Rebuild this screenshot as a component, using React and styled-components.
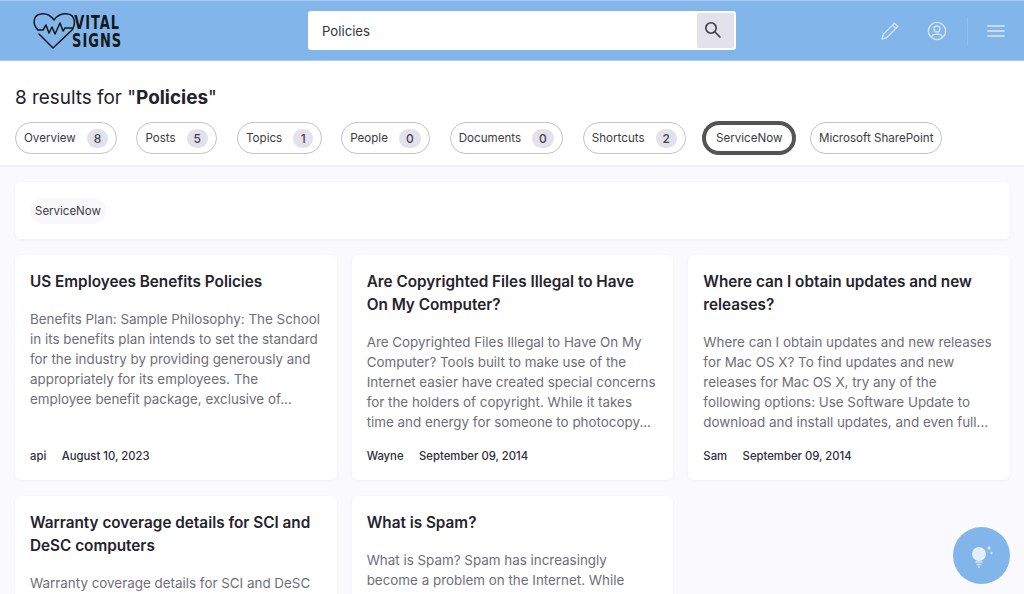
import React from "react";
import styled, { createGlobalStyle } from "styled-components";

const Global = createGlobalStyle`
  html, body { margin: 0; padding: 0; height: 594px; overflow: hidden; background: #faf9fe; }
  body { font-family: Inter, "Liberation Sans", sans-serif; color: #24232b; }
  * { box-sizing: border-box; }
`;

const Page = styled.div`
  height: 594px;
  overflow: hidden;
  position: relative;
`;
const Header = styled.header`
  height: 61px;
  background: #82b5ea;
  border-top: 1px solid #a9cdf2;
  border-bottom: 1px solid #a9cdf2;
  display: flex;
  align-items: center;
  padding: 0 17px 0 32px;
`;
const Logo = styled.div`
  width: 276px;
  display: flex;
  align-items: center;
  color: #15171c;
  svg { overflow: visible; flex: none; }
`;
const LogoText = styled.div`
  font-family: "DejaVu Sans Condensed", "DejaVu Sans", sans-serif;
  font-weight: 700;
  font-size: 19px;
  line-height: 18px;
  letter-spacing: 1.3px;
  padding-top: 1px;
  text-align: center;
  width: 66px;
  transform: scaleX(0.76);
  transform-origin: left center;
`;
const SearchBox = styled.div`
  width: 428px;
  height: 39px;
  background: #fff;
  border-radius: 3px;
  display: flex;
  align-items: stretch;
  padding: 2px;
`;
const SearchText = styled.div`
  flex: 1;
  padding-left: 12px;
  font-size: 13.2px;
  line-height: 36px;
  color: #34333b;
`;
const SearchButton = styled.div`
  width: 37px;
  background: #e2e1ec;
  border-radius: 2px;
  display: flex;
  align-items: center;
  justify-content: center;
  padding: 0 5px 2px 0;
`;
const Tools = styled.div`
  margin-left: auto;
  display: flex;
  align-items: center;
  height: 28px;
`;
const ToolIcon = styled.div`
  display: flex;
  width: 22px;
  justify-content: center;
  margin-right: ${(p) => p.$gap || 0}px;
`;
const Divider = styled.div`
  width: 1px;
  height: 28px;
  background: #93bfec;
  margin-right: 17px;
`;
const Results = styled.section`
  height: 106px;
  background: #fff;
  border-bottom: 2px solid #f1f0f6;
  padding: 24px 15px 0;
`;
const Title = styled.h1`
  margin: 0;
  font-size: 18.9px;
  line-height: 26px;
  font-weight: 400;
  color: #22212a;
  b { font-weight: 700; }
`;
const Tabs = styled.div`
  display: flex;
  align-items: center;
  margin-top: 10px;
  height: 34px;
`;
const Tab = styled.div`
  height: ${(p) => (p.$active ? 34 : 32)}px;
  border-radius: 17px;
  border: ${(p) => (p.$active ? "4px solid #545454" : "1px solid #c4c3c9")};
  background: #fff;
  display: flex;
  align-items: center;
  padding: ${(p) => (p.$active ? "0 10px" : "0 5px 0 8px")};
  font-size: 11.6px;
  color: #3c3b42;
  margin-right: ${(p) => p.$gap}px;
  white-space: nowrap;
  ${(p) => p.$plain && "padding: 0 7.5px;"}
`;
const Count = styled.span`
  min-width: 20px;
  height: 19px;
  padding: 0 7px;
  border-radius: 10px;
  background: #e2e1ec;
  margin-left: 11px;
  margin-right: 3px;
  text-align: center;
  line-height: 19px;
  font-size: 12px;
  font-weight: 500;
  color: #45444c;
`;
const Content = styled.main`
  padding: 15px 14px 0 15px;
`;
const FilterBar = styled.div`
  height: 57px;
  background: #fff;
  border-radius: 6px;
  box-shadow: 0 1px 3px rgba(60, 55, 100, 0.06);
  display: flex;
  align-items: center;
  padding: 0 15px;
  margin-bottom: 16px;
`;
const Chip = styled.div`
  height: 26px;
  line-height: 26px;
  padding: 0 5px;
  background: #f8f8fa;
  border-radius: 13px;
  font-size: 11.5px;
  color: #3c3b42;
`;
const Grid = styled.div`
  display: grid;
  grid-template-columns: repeat(3, 1fr);
  grid-auto-rows: 225px;
  gap: 16px 15px;
`;
const Card = styled.article`
  background: #fff;
  border-radius: 6px;
  box-shadow: 0 1px 3px rgba(60, 55, 100, 0.06);
  padding: 15px 15px 14px;
  display: flex;
  flex-direction: column;
`;
const CardTitle = styled.h2`
  margin: 0 0 15.5px;
  font-size: 15.3px;
  line-height: 23px;
  font-weight: 600;
  color: #24232b;
`;
const CardBody = styled.p`
  margin: 0;
  font-size: 13.4px;
  line-height: 20.2px;
  color: #6f6e76;
`;
const Meta = styled.div`
  margin-top: auto;
  display: flex;
  font-size: 11.3px;
  line-height: 20px;
  font-weight: 500;
  color: #2f2e36;
  gap: 15.5px;
`;
const Fab = styled.div`
  position: absolute;
  left: 953px;
  top: 527px;
  width: 57px;
  height: 57px;
  border-radius: 50%;
  background: #82b5ea;
  display: flex;
  align-items: center;
  justify-content: center;
`;

const tabs = [
  ["Overview", 8, 19],
  ["Posts", 5, 20],
  ["Topics", 1, 19],
  ["People", 0, 20],
  ["Documents", 0, 20],
  ["Shortcuts", 2, 16],
];

const cards = [
  {
    title: "US Employees Benefits Policies",
    body: "Benefits Plan: Sample Philosophy: The School in its benefits plan intends to set the standard for the industry by providing generously and appropriately for its employees. The employee benefit package, exclusive of...",
    author: "api",
    date: "August 10, 2023",
  },
  {
    title: "Are Copyrighted Files Illegal to Have On My Computer?",
    body: "Are Copyrighted Files Illegal to Have On My Computer? Tools built to make use of the Internet easier have created special concerns for the holders of copyright. While it takes time and energy for someone to photocopy...",
    author: "Wayne",
    date: "September 09, 2014",
  },
  {
    title: "Where can I obtain updates and new releases?",
    body: "Where can I obtain updates and new releases for Mac OS X? To find updates and new releases for Mac OS X, try any of the following options: Use Software Update to download and install updates, and even full...",
    author: "Sam",
    date: "September 09, 2014",
  },
  {
    title: "Warranty coverage details for SCI and DeSC computers",
    body: "Warranty coverage details for SCI and DeSC computers",
  },
  {
    title: "What is Spam?",
    body: "What is Spam? Spam has increasingly become a problem on the Internet. While",
  },
];

const HeartLogo = () => (
  <svg width="40" height="38" viewBox="0 0 40 38" fill="none" stroke="#15171c" strokeWidth="1.5" strokeLinejoin="round" strokeLinecap="round">
    <path d="M6 18 C0 12 1 3 9 2 C15 1 19 4 22 8 C25 3 31 1 36 2 C43 3 44 12 40 18 L21 36 L7 22" />
    <path d="M6 18 H11 L14 13 L17 21 L20 15 L23 22 L28 11 L31 19 L33 16 H40" />
  </svg>
);

export default function App() {
  return (
    <Page>
      <Global />
      <Header>
        <Logo>
          <HeartLogo />
          <LogoText>
            VITAL
            <br />
            SIGNS
          </LogoText>
        </Logo>
        <SearchBox>
          <SearchText>Policies</SearchText>
          <SearchButton>
            <svg width="20" height="20" viewBox="0 0 20 20" fill="none" stroke="#3b3a42" strokeWidth="1.6" strokeLinecap="round">
              <circle cx="8" cy="8" r="5.2" />
              <path d="M12 12 L17 17" />
            </svg>
          </SearchButton>
        </SearchBox>
        <Tools>
          <ToolIcon $gap={25}>
            <svg width="20" height="20" viewBox="0 0 20 20" fill="none" stroke="#cfe2f7" strokeWidth="1.4" strokeLinejoin="round">
              <path d="M2 18 L3.2 13.5 L14.5 2.2 L17.8 5.5 L6.5 16.8 Z" />
              <path d="M12.5 4.2 L15.8 7.5" />
            </svg>
          </ToolIcon>
          <ToolIcon $gap={19}>
            <svg width="20" height="20" viewBox="0 0 20 20" fill="none" stroke="#cfe2f7" strokeWidth="1.4">
              <circle cx="10" cy="10" r="8.6" />
              <circle cx="10" cy="8" r="3" />
              <path d="M4.5 16 C5.5 13.5 7.5 13 10 13 C12.5 13 14.5 13.5 15.5 16" />
            </svg>
          </ToolIcon>
          <Divider />
          <ToolIcon>
            <svg width="18" height="14" viewBox="0 0 18 14" stroke="#dbe9f9" strokeWidth="1.7" strokeLinecap="round">
              <path d="M1 2 H17 M1 7 H17 M1 12 H17" />
            </svg>
          </ToolIcon>
        </Tools>
      </Header>
      <Results>
        <Title>
          8 results for "<b>Policies</b>"
        </Title>
        <Tabs>
          {tabs.map(([name, n, gap]) => (
            <Tab key={name} $gap={gap}>
              {name}
              <Count>{n}</Count>
            </Tab>
          ))}
          <Tab $active $gap={14}>ServiceNow</Tab>
          <Tab $plain $gap={0}>Microsoft SharePoint</Tab>
        </Tabs>
      </Results>
      <Content>
        <FilterBar>
          <Chip>ServiceNow</Chip>
        </FilterBar>
        <Grid>
          {cards.map((c) => (
            <Card key={c.title}>
              <CardTitle>{c.title}</CardTitle>
              <CardBody>{c.body}</CardBody>
              {c.author && (
                <Meta>
                  <span>{c.author}</span>
                  <span>{c.date}</span>
                </Meta>
              )}
            </Card>
          ))}
        </Grid>
      </Content>
      <Fab>
        <svg width="26" height="26" viewBox="0 0 26 26">
          <circle cx="10" cy="11" r="7" fill="#e3f0fc" />
          <path d="M6.5 19 H13.5 M7.5 21.5 H12.5" stroke="#cfe2f7" strokeWidth="1.5" />
          <path d="M9 24 H11" stroke="#cfe2f7" strokeWidth="1.5" />
          <circle cx="20" cy="5" r="1.7" fill="#cfe2f7" />
          <circle cx="22.5" cy="10" r="1.2" fill="#cfe2f7" />
        </svg>
      </Fab>
    </Page>
  );
}
